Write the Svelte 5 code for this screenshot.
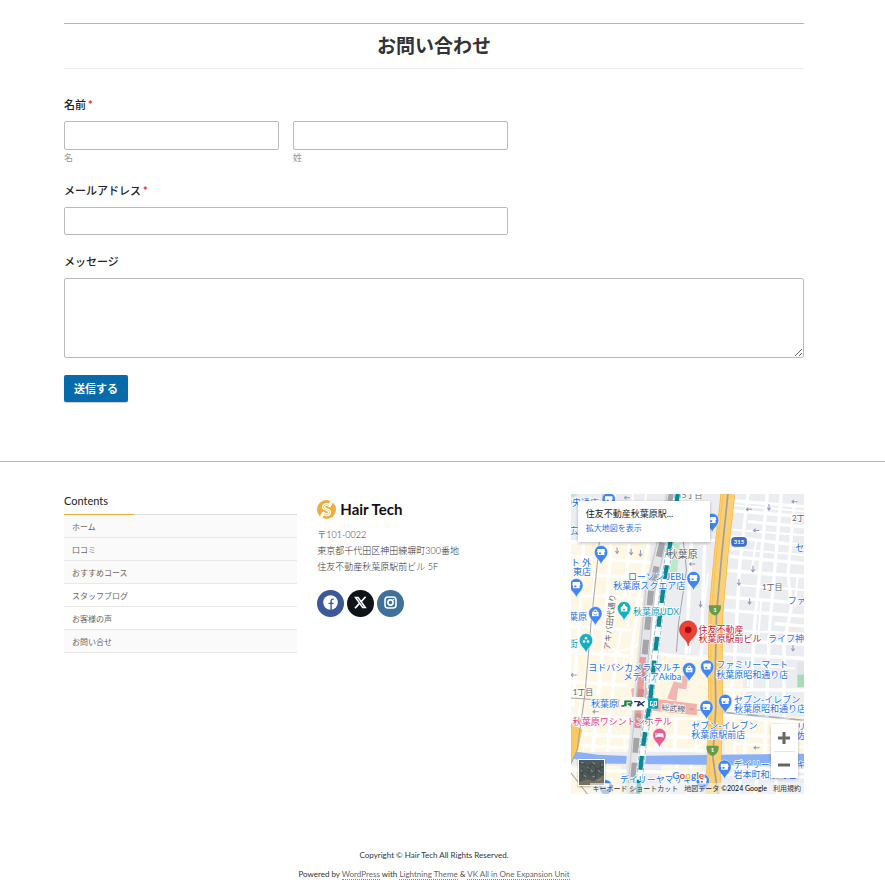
<script>
  const menu = [
    { label: 'ホーム', shaded: true },
    { label: '口コミ', shaded: true },
    { label: 'おすすめコース', shaded: true },
    { label: 'スタッフブログ', shaded: false },
    { label: 'お客様の声', shaded: false },
    { label: 'お問い合せ', shaded: true }
  ];

  const blue = '#4285f4';
  const pins = [
    { x: 143, y: 478, kind: 'shop' },
    { x: 453, y: 540, kind: 'shop' },
    { x: 120, y: 636, kind: 'shop' },
    { x: 46, y: 735, kind: 'shop' },
    { x: 397, y: 714, kind: 'shop' },
    { x: 103, y: 819, kind: 'bag' },
    { x: 189, y: 804, kind: 'tower', color: '#12b0c2' },
    { x: 75, y: 900, kind: 'dots', color: '#12b0c2' },
    { x: 384, y: 987, kind: 'bag' },
    { x: 438, y: 979, kind: 'shop' },
    { x: 492, y: 1082, kind: 'shop' },
    { x: 436, y: 1100, kind: 'shop' },
    { x: 295, y: 1184, kind: 'hotel', color: '#ec5a92' },
    { x: 490, y: 1279, kind: 'shop' },
    { x: 425, y: 1321, kind: 'shop' },
    { x: 134, y: 1338, kind: 'shop' }
  ];

  const labels = [
    { t: '中央通店', x: 6, y: 498 },
    { t: '広', x: 24, y: 582 },
    { t: 'ト 外', x: 90, y: 677, end: true },
    { t: '東店', x: 90, y: 705, end: true },
    { t: 'ローソン JEBL', x: 374, y: 720, end: true },
    { t: '秋葉原スクエア店', x: 372, y: 748, end: true },
    { t: '葉原', x: 78, y: 838, end: true },
    { t: '秋葉原UDX', x: 216, y: 824, c: 'teal' },
    { t: '街', x: 50, y: 919, end: true, c: 'teal' },
    { t: '住友不動産', x: 412, y: 877, c: 'red' },
    { t: '秋葉原駅前ビル', x: 412, y: 904, c: 'red' },
    { t: 'ライフ神', x: 620, y: 904 },
    { t: 'ファ', x: 679, y: 792 },
    { t: 'セ', x: 702, y: 632 },
    { t: 'ヨドバシカメラ マルチ', x: 358, y: 992, end: true },
    { t: 'メディアAkiba', x: 360, y: 1020, end: true },
    { t: 'ファミリーマート', x: 465, y: 984 },
    { t: '秋葉原昭和通り店', x: 465, y: 1012 },
    { t: 'セブン-イレブン', x: 518, y: 1088 },
    { t: '秋葉原昭和通り店', x: 518, y: 1116 },
    { t: '秋葉原', x: 90, y: 1100 },
    { t: '秋葉原ワシントンホテル', x: 35, y: 1154, c: 'pink' },
    { t: 'セブン-イレブン', x: 390, y: 1166 },
    { t: '秋葉原駅前店', x: 390, y: 1194 },
    { t: 'リ', x: 706, y: 1168 },
    { t: '佐', x: 706, y: 1197 },
    { t: 'デイリーヤマザキ', x: 517, y: 1284 },
    { t: '岩本町和泉町店', x: 517, y: 1312 },
    { t: 'デイリーヤマザキ', x: 176, y: 1327 },
    { t: '秋葉原', x: 320, y: 654, c: 'area' },
    { t: '5丁目', x: 362, y: 474, c: 'block' },
    { t: '2丁', x: 692, y: 543, c: 'block' },
    { t: '1丁目', x: 602, y: 751, c: 'block' },
    { t: '1丁目', x: 35, y: 1065, c: 'block' }
  ];

  const arrowsUp = [[168, 630], [210, 634], [238, 638], [623, 500], [575, 685], [533, 725], [565, 782], [418, 790], [695, 922]];
  const arrowsSide = [[198, 473], [563, 508], [585, 571], [700, 485], [393, 672], [38, 1004], [104, 1114], [586, 1222]];
</script>

<div class="page">
  <main class="wrap">
    <h2 class="title">お問い合わせ</h2>
    <form onsubmit={(e) => e.preventDefault()}>
      <fieldset class="field">
        <legend class="label">名前<span class="req">*</span></legend>
        <div class="names">
          <div class="name">
            <input id="first" type="text" required />
            <label class="sub" for="first">名</label>
          </div>
          <div class="name">
            <input id="last" type="text" required />
            <label class="sub" for="last">姓</label>
          </div>
        </div>
      </fieldset>
      <div class="field">
        <label class="label" for="mail">メールアドレス<span class="req">*</span></label>
        <input id="mail" class="mail" type="email" required />
      </div>
      <div class="field last">
        <label class="label" for="message">メッセージ</label>
        <textarea id="message"></textarea>
      </div>
      <button class="submit" type="submit">送信する</button>
    </form>
  </main>

  <footer>
    <div class="wrap columns">
      <section>
        <h4>Contents</h4>
        <ul class="menu">
          {#each menu as item}
            <li class:shaded={item.shaded}><a href="#top">{item.label}</a></li>
          {/each}
        </ul>
      </section>

      <section class="about">
        <a class="logo" href="#top">
          <svg width="19" height="19" viewBox="0 0 56 56" aria-hidden="true">
            <circle cx="28" cy="28" r="28" fill="#f0ad3c" />
            <path d="M44 3 L37 17 C33 11 20 12 19 20 C18 29 37 26 37 36 C37 44 24 46 19 39 L11 53" fill="none" stroke="#fff" stroke-width="9" stroke-linejoin="round" />
            <path d="M35 17 C31 12 20 13 19 20 C18 29 37 26 37 36 C37 43 25 45 20 39" fill="none" stroke="#f0ad3c" stroke-width="2" />
          </svg>
          <span>Hair Tech</span>
        </a>
        <p>〒101-0022<br />東京都千代田区神田練塀町300番地<br />住友不動産秋葉原駅前ビル 5F</p>
        <div class="social">
          <a class="fb" href="#facebook" aria-label="Facebook">
            <svg width="27" height="27" viewBox="0 0 27 27">
              <circle cx="13.500" cy="12.500" r="7.300" fill="#fff" />
              <path d="M13.400 20v-6h-1.800v-1.300h1.800v-1.500c0-1.800.9-2.700 2.500-2.700h.9v1.300h-.8c-.9 0-1.200.5-1.200 1.300v1.600h1.900l-.2 1.300h-1.700v6z" fill="#3b5998" />
            </svg>
          </a>
          <a class="x" href="#x" aria-label="X">
            <svg width="27" height="27" viewBox="0 0 27 27">
              <path d="M8.500 7.500h2.600l7.200 10h-2.600z" fill="none" stroke="#fff" stroke-width="1.500" />
              <path d="M18.600 6.800l-4.700 5.200M12.500 13.400l-4.500 4.900" stroke="#fff" stroke-width="1.700" />
            </svg>
          </a>
          <a class="ig" href="#instagram" aria-label="Instagram">
            <svg width="27" height="27" viewBox="0 0 27 27" fill="none" stroke="#fff">
              <rect x="8" y="7" width="11" height="11" rx="3" stroke-width="1.600" />
              <circle cx="13.500" cy="12.500" r="2.600" stroke-width="1.600" />
              <circle cx="16.600" cy="9.500" r=".8" fill="#fff" stroke="none" />
            </svg>
          </a>
        </div>
      </section>

      <section class="map">
        <svg class="tiles" viewBox="30 462 699 900" preserveAspectRatio="xMinYMin slice" role="img" aria-label="秋葉原の地図">
          <rect x="30" y="462" width="699" height="900" fill="#ebedf1" />
          <path d="M30 600H270L235 1235H30zM100 510H200V600H100zM300 945H445V1235H250zM490 1130H729V1240H490zM490 1000H545V1240H490zM30 1275H180V1362H30zM300 1275H420V1330H300z" fill="#fef7e3" />
          <path d="M322 608l34 5-8 85-26-2zM30 462h20l-10 10H30z" fill="#bfe8cb" />
          <path d="M708 1003h21v38h-21z" fill="#a9dbb6" />
          <path d="M402 1132h13v32h-13z" fill="#d5ead8" />
          <path d="M708 965h21v36h-21z" fill="#e3e5e9" />

          <g class="streets">
            <path d="M512 482L729 500M510 512L729 530M560 545L729 560M505 590L729 618M500 648L729 670M495 690L600 700L729 708M490 770L729 790M490 810L729 828M480 900L729 912M480 940L729 955M480 1048L729 1050M480 1125L729 1150M480 1180L729 1195M480 1300L729 1310" />
            <path d="M560 462L535 680L520 960L510 1050M618 462L600 650L580 850L570 1050M660 462L640 690L625 860L610 1240M700 480L680 700L690 800L668 910V1240M515 1050L520 1240M550 1050V1240M640 850L729 858" />
            <path d="M30 605H300L470 600M30 648L270 668M30 700L260 716M60 768H160L250 782M30 858L210 870M30 935L220 950M280 940L450 958M30 1025L200 1035M30 1125L220 1135M250 1135H450M30 1180L220 1190M250 1190H450M30 1215L430 1232M30 1288L430 1298M480 1278L729 1292" />
            <path d="M160 462L148 650L125 930L95 1235M205 605L190 770M262 600L232 780L205 990M68 605L55 850L35 1100M300 640L270 930M398 462L390 620L375 940M430 615L420 960M345 1130L340 1235M300 1130L285 1235M165 930L140 1235M350 1270L320 1362M390 1270L380 1362M540 1295L530 1362M590 1295L580 1362M640 1295L650 1362" />
          </g>
          <g class="thin">
            <path d="M515 495L729 514M507 568L729 586M500 625L729 645M540 735L729 750M480 870L729 880M520 970L700 985M520 1090L729 1100M520 1210L729 1220M585 600L570 700M710 700L700 800M600 780L590 900M560 960V1040M100 700L90 930M180 870L170 930M210 720L200 860M60 1040L55 1120M190 1190V1230M440 700L430 790M390 860L385 940M405 1140V1230M80 500H250M180 540H280M215 462L210 600M255 462L240 600" />
          </g>
          <path d="M165 935l58-15 10-10M155 925l35 25-5 45 65-20M395 1228l40-25" fill="none" stroke="#fff" stroke-width="5" />

          <path d="M30 1232L110 1243L200 1247L729 1240V1278L430 1273L110 1269L30 1254z" fill="#8bb0f6" />
          <path d="M30 1150l32 18-12 60-20 38z" fill="#fbc964" stroke="#f3ae2d" stroke-width="2" />
          <path d="M200 1225h38l-5 60h-40z" fill="#e8eaee" />

          <path d="M210 1046l22-8 5-95 13 5 5 96 18 5v26l134 16v34l-125-13-34-6-18 98-12-4 2-98-95-6v-20l90 4z" fill="#f3a3a0" opacity=".85" />
          <path d="M318 1075l20-52 24 6 2-24 18 4-7 38-24-3-5 38z" fill="#efb8b4" />

          <path d="M126 462L112 640L90 850L72 1060L48 1230L30 1270M30 1073L130 1080M366 600L376 690L352 850L346 935M30 1298L80 1362" fill="none" stroke="#a3a5a9" stroke-width="3" />
          <path d="M385 1106L729 1140" stroke="#a9abae" stroke-width="5" fill="none" />
          <path d="M400 1107L729 1140" stroke="#ddd" stroke-width="3" stroke-dasharray="32 32" fill="none" />

          <path d="M328 462L300 610L264 760L247 930L226 1150L208 1362" fill="none" stroke="#e4e5e8" stroke-width="34" />
          <path d="M332 462L305 600L270 750L252 930L230 1150L213 1362" fill="none" stroke="#a5a5a7" stroke-width="18" stroke-dasharray="44 30" />
          <path d="M318 462L290 600L254 750L238 930L218 1150L199 1362M346 462L316 600L282 750L264 930L242 1150L224 1362" fill="none" stroke="#b6b7bb" stroke-width="2" />
          <path d="M246 950L228 1160" stroke="#e8827f" stroke-width="18" opacity=".7" />

          <path d="M350 462L330 590L306 750L283 930L266 1090L244 1230L230 1362" fill="none" stroke="#fff" stroke-width="24" />
          <path d="M341 462L321 590L297 750L274 930L257 1090L235 1230L221 1362M359 462L339 590L315 750L292 930L275 1090L253 1230L239 1362" fill="none" stroke="#57a9b2" stroke-width="2" stroke-dasharray="14 4" />
          <path d="M350 462L330 590L306 750L283 930L266 1090L244 1230L230 1362" fill="none" stroke="#0d8793" stroke-width="13" stroke-dasharray="42 30" />

          <path d="M500 462L480 640L464 820L462 1000L464 1100L455 1362" fill="none" stroke="#f5b63c" stroke-width="44" />
          <path d="M500 462L480 640L464 820L462 1000L464 1100L455 1362" fill="none" stroke="#fbcf74" stroke-width="40" />
          <path d="M486 462L466 640L450 820L448 1000L450 1100L442 1362" fill="none" stroke="#f8c255" stroke-width="3" />
          <path d="M500 462L482 640L466 820L462 1000L464 1100L455 1250L470 1362" fill="none" stroke="#a39f99" stroke-width="5" />

          <g fill="none" stroke="#9499ba" stroke-width="3">
            {#each arrowsUp as [x, y]}
              <path d="M{x} {y - 8}v18M{x - 5} {y + 3}l5 7 5-7" />
            {/each}
            {#each arrowsSide as [x, y]}
              <path d="M{x - 8} {y}h17M{x - 2} {y - 5}l-6 5 6 5" />
            {/each}
          </g>

          <rect x="510" y="591" width="47" height="29" rx="11" fill="#3e70c4" />
          <text class="shield" x="533" y="613">315</text>
          {#each [[461, 808], [454, 1229]] as [x, y]}
            <path d="M{x - 18} {y - 13}h36c2 18-8 28-18 31c-10-3-20-13-18-31z" fill="#6b9b45" />
            <text class="shield" {x} y={y + 7}>1</text>
          {/each}

          {#each pins as p}
            <g transform="translate({p.x} {p.y})">
              <path d="M0 39C-2 24-20 18-20 0A20 20 0 0 1 20 0C20 18 2 24 0 39z" fill={p.color ?? blue} stroke="#fff" stroke-width="1.500" />
              {#if p.kind === 'shop'}
                <path d="M-11-9h22v5l2 4h-3v9h-20v-9h-3l2-4zM-6 1v5h6v-5z" fill="#fff" fill-rule="evenodd" />
              {:else if p.kind === 'bag'}
                <path d="M-10-4h20v13h-20z" fill="#fff" />
                <path d="M-5-4a5 6 0 0 1 10 0" fill="none" stroke="#fff" stroke-width="3" />
                <path d="M-5 1a5 4 0 0 0 10 0" fill="none" stroke={blue} stroke-width="2" />
              {:else if p.kind === 'tower'}
                <path d="M-10-4h4v-3h3v-5h6v5h3v3h4v14h-20zM-3 2v4h6v-4z" fill="#fff" fill-rule="evenodd" />
              {:else if p.kind === 'dots'}
                <g fill="#fff"><circle cy="-6" r="4" /><circle cx="-6" cy="4" r="4" /><circle cx="6" cy="4" r="4" /></g>
              {:else}
                <path d="M-12-7h3v8h2v-6h15q4 0 4 5v8h-3v-3h-18v3h-3z" fill="#fff" />
              {/if}
            </g>
          {/each}

          <path d="M381 917C378 895 355 892 355 868A26 26 0 0 1 407 868C407 892 384 895 381 917z" fill="#ea4335" stroke="#c5221f" stroke-width="1.500" />
          <circle cx="381" cy="869" r="10" fill="#a50e0e" />

          <text class="block" transform="translate(146 930) rotate(-84)">アキバ田代通り</text>
          <text class="block" transform="translate(300 1110) rotate(4)">総武線</text>
          {#each labels as l}
            <text class={l.c} class:end={l.end} x={l.x} y={l.y}>{l.t}</text>
          {/each}

          <rect x="174" y="1070" width="88" height="40" rx="18" fill="#fff" />
          <path d="M181 1096q10 3 11-4v-9h18q5 6-2 8h-9M194 1084v14M203 1091l8 6" fill="none" stroke="#15803d" stroke-width="5" />
          <path d="M219 1084h16l-6 14M229 1098l22-15M234 1084l14 14" fill="none" stroke="#27336c" stroke-width="4" />
          <rect x="261" y="1074" width="30" height="31" fill="#00a0b8" />
          <path d="M274 1084h-6v11h6v-5M279 1084h7v11h-7zM274 1099h6" fill="none" stroke="#fff" stroke-width="3" />
          <text class="google" x="333" y="1317"><tspan fill="#4285f4">G</tspan><tspan fill="#ea4335">o</tspan><tspan fill="#fbbc04">o</tspan><tspan fill="#4285f4">g</tspan><tspan fill="#34a853">l</tspan><tspan fill="#ea4335">e</tspan></text>
        </svg>

        <div class="card">
          <strong>住友不動産秋葉原駅...</strong>
          <a href="#map">拡大地図を表示</a>
        </div>
        <button class="aerial" type="button" aria-label="航空写真を表示">
          <svg width="25" height="25" viewBox="0 0 75 75">
            <rect width="75" height="75" fill="#4f5a58" />
            <path d="M0 10l20 4 8 16 12-20 14 18 21-8M4 40l16-8 14 14 18-12 20 12M10 24v30M30 12v32M50 20v36M64 8v24" stroke="#3b4846" stroke-width="3" fill="none" />
            <path d="M0 66l26-8 18 6 31-20v31H0z" fill="#77705f" />
            <path d="M6 8h8M24 20l6 6M40 8l8 3M58 30l6 8M14 46l8 4M40 50h8M55 62l12-5M36 30l5 6M66 12l5 4M6 30l4 4" stroke="#8997a0" stroke-width="3" />
          </svg>
        </button>
        <div class="zoom">
          <button type="button" aria-label="ズームイン"><svg width="14" height="14" viewBox="0 0 14 14"><path d="M7 1v12M1 7h12" /></svg></button>
          <button type="button" aria-label="ズームアウト"><svg width="14" height="14" viewBox="0 0 14 14"><path d="M1 7h12" /></svg></button>
        </div>
        <div class="credits">
          <span>キーボード ショートカット</span><span>地図データ <b>©2024 Google</b></span><span>利用規約</span>
        </div>
      </section>
    </div>

    <div class="copy">
      <p>Copyright © Hair Tech All Rights Reserved.</p>
      <p>Powered by <a href="#wp">WordPress</a> with <a href="#theme">Lightning Theme</a> &amp; <a href="#vk">VK All in One Expansion Unit</a></p>
    </div>
  </footer>
</div>

<style>
  :global(body) { background: #fff; }
  .page { font-family: Lato, "Noto Sans CJK JP", sans-serif; color: #333; padding-top: 23px; }
  .page * { box-sizing: border-box; }
  a { color: inherit; text-decoration: none; }
  input, textarea, button { font: inherit; }
  .wrap { padding: 0 81px 0 64px; }
  .title {
    margin: 0 0 28px; border-top: 1px solid #f0ad3c; border-bottom: 1px solid #eee;
    font-size: 19px; line-height: 44px; font-weight: 700; text-align: center;
  }
  form { padding-bottom: 59px; }
  .field { margin: 0 0 19px; padding: 0; border: 0; min-width: 0; }
  .last { margin-bottom: 17px; }
  .label { display: block; margin: 0 0 9px; padding: 0; font-size: 11px; line-height: 15px; font-weight: 500; color: #222; }
  .req { color: #e02b2b; margin-left: 2px; font-weight: 700; }
  .names { display: flex; gap: 14px; width: 60%; }
  .name { flex: 1; min-width: 0; }
  input, textarea { display: block; width: 100%; border: 1px solid #bbb; border-radius: 2px; background: #fff; padding: 4px 8px; }
  input { height: 29px; }
  .mail { width: 60%; height: 28px; }
  textarea { height: 80px; resize: vertical; }
  .sub { display: block; margin-top: 2px; color: #999; font-size: 9px; line-height: 12px; }
  .submit {
    border: 0; border-radius: 2px; background: #066aab; color: #fff; padding: 0 10px;
    font-size: 11px; line-height: 27px; font-weight: 700; box-shadow: 0 1px 1px #ccc;
  }

  footer { border-top: 1px solid #f0ad3c; padding-top: 32px; }
  .columns { display: grid; grid-template-columns: repeat(3, minmax(0, 1fr)); gap: 20px; }
  h4 { margin: 0; font-size: 11px; line-height: 14px; font-weight: 400; padding-bottom: 6px; color: #222; }
  .menu { list-style: none; margin: 0; padding: 0; border-top: 1px solid #ddd; }
  .menu::before { content: ""; display: block; width: 30%; height: 1px; margin-top: -1px; background: #f0ad3c; }
  .menu li { border-bottom: 1px solid #e8e8e8; padding: 0 8px; font-size: 8px; line-height: 22px; height: 23px; color: #666; }
  .menu li a { display: block; padding-top: 1px; }
  .menu .shaded { background: #fafafa; }

  .logo { display: flex; align-items: center; gap: 4px; margin-top: 6px; color: #111; font-size: 15px; line-height: 19px; font-weight: 700; }
  .about p { margin: 8px 0 15px; font-size: 9px; line-height: 16px; font-weight: 300; }
  .social { display: flex; gap: 3px; }
  .social a { width: 27px; height: 27px; border-radius: 50%; }
  .social svg { display: block; }
  .fb { background: #3b5998; }
  .x { background: #0f1419; }
  .ig { background: #3f729b; }

  .map { position: relative; height: 300px; overflow: hidden; background: #ebedf1; }
  .tiles { display: block; width: 100%; height: 100%; font-size: 27px; }
  .streets { fill: none; stroke: #fff; stroke-width: 10; }
  .thin { fill: none; stroke: #fff; stroke-width: 6; }
  .tiles text { fill: #1a73e8; stroke: #fff; stroke-width: 4px; paint-order: stroke; }
  .tiles .teal { fill: #129eaf; }
  .tiles .red { fill: #c5221f; }
  .tiles .pink { fill: #e33d80; }
  .tiles .area { fill: #5f6368; font-size: 30px; }
  .tiles .block { fill: #5f6368; font-size: 24px; }
  .tiles .end { text-anchor: end; }
  .tiles .shield { fill: #fff; stroke: none; font-size: 18px; font-weight: 700; text-anchor: middle; }
  .tiles .google { font-size: 30px; font-weight: 700; }
  .card {
    position: absolute; top: 7px; left: 7px; width: 132px; height: 41px; padding: 6px 8px;
    display: flex; flex-direction: column; background: #fff; box-shadow: 0 1px 3px #0004;
  }
  .card strong { font-size: 9px; line-height: 14px; font-weight: 400; white-space: nowrap; color: #222; }
  .card a { font-size: 8px; line-height: 14px; color: #1a73e8; }
  .aerial { position: absolute; left: 7px; bottom: 8px; padding: 0; border: 1px solid #fff; line-height: 0; box-shadow: 0 1px 2px #0004; }
  .zoom { position: absolute; right: 6px; bottom: 16px; width: 27px; padding: 0 3px; background: #fff; box-shadow: 0 1px 3px #0004; }
  .zoom button { display: flex; align-items: center; justify-content: center; width: 100%; height: 27px; padding: 0; border: 0; background: none; }
  .zoom button + button { border-top: 1px solid #e6e6e6; }
  .zoom path { stroke: #666; stroke-width: 3; }
  .credits {
    position: absolute; right: 0; bottom: 0; display: flex; gap: 6px; padding: 0 3px;
    background: #f5f5f599; color: #333; font-size: 7px; line-height: 11px; white-space: nowrap;
  }
  .credits b { font-weight: 400; color: #000; }

  .copy { padding: 52px 17px 0 0; text-align: center; font-size: 8px; line-height: 19px; }
  .copy p { margin: 0; }
  .copy a { color: #666; border-bottom: 1px dotted #888; }
</style>
